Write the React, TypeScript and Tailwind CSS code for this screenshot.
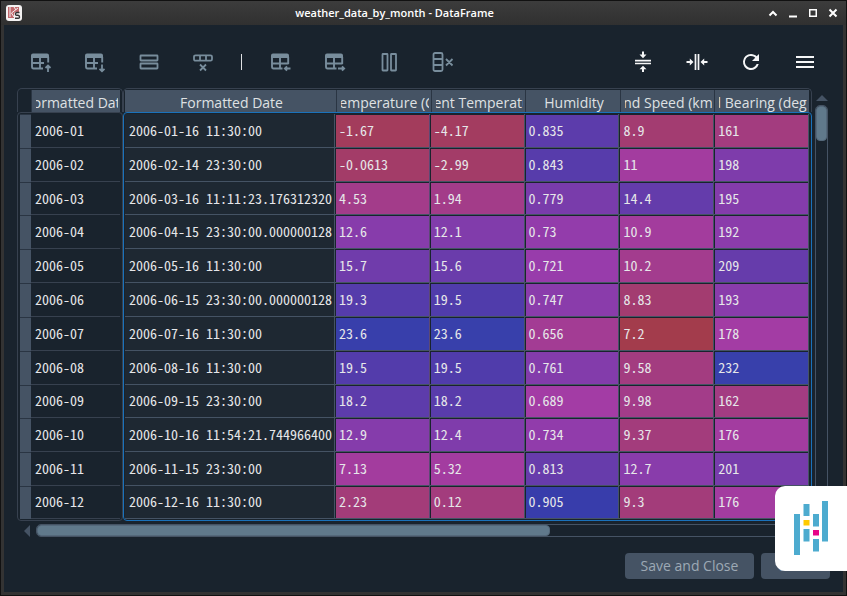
import type { ReactNode } from "react";

type Column = { title: string; min: number; max: number; values: string[] };

const months = Array.from({ length: 12 }, (_, i) => `2006-${String(i + 1).padStart(2, "0")}`);

const dates = [
  "2006-01-16 11:30:00",
  "2006-02-14 23:30:00",
  "2006-03-16 11:11:23.176312320",
  "2006-04-15 23:30:00.000000128",
  "2006-05-16 11:30:00",
  "2006-06-15 23:30:00.000000128",
  "2006-07-16 11:30:00",
  "2006-08-16 11:30:00",
  "2006-09-15 23:30:00",
  "2006-10-16 11:54:21.744966400",
  "2006-11-15 23:30:00",
  "2006-12-16 11:30:00",
];

const columns: Column[] = [
  {
    title: "Temperature (C)",
    min: -4.5,
    max: 23.7,
    values: ["-1.67", "-0.0613", "4.53", "12.6", "15.7", "19.3", "23.6", "19.5", "18.2", "12.9", "7.13", "2.23"],
  },
  {
    title: "Apparent Temperature (C)",
    min: -8,
    max: 23.7,
    values: ["-4.17", "-2.99", "1.94", "12.1", "15.6", "19.5", "23.6", "19.5", "18.2", "12.4", "5.32", "0.12"],
  },
  {
    title: "Humidity",
    min: 0.51,
    max: 0.91,
    values: ["0.835", "0.843", "0.779", "0.73", "0.721", "0.747", "0.656", "0.761", "0.689", "0.734", "0.813", "0.905"],
  },
  {
    title: "Wind Speed (km/h)",
    min: 6.96,
    max: 16.6,
    values: ["8.9", "11", "14.4", "10.9", "10.2", "8.83", "7.2", "9.58", "9.98", "9.37", "12.7", "9.3"],
  },
  {
    title: "Wind Bearing (degrees)",
    min: 135,
    max: 232,
    values: ["161", "198", "195", "192", "209", "193", "178", "232", "162", "176", "201", "176"],
  },
];

// Heat-map shade: high values are blue, low values run through magenta to red.
function shade(value: string, { min, max }: Column) {
  const t = (max - Number(value)) / (max - min);
  const hue = 360 * (0.66 + 0.33 * t);
  return `hsl(${hue} 100% 65% / 0.6)`;
}

function Svg({ children }: { children: ReactNode }) {
  return (
    <svg viewBox="0 0 24 24" className="size-6" fill="none" stroke="currentColor" strokeWidth="1.8" aria-hidden="true">
      {children}
    </svg>
  );
}

function TableGlyph({ side }: { side?: boolean }) {
  return (
    <g>
      <path d="M3 8V5.5A2 2 0 0 1 5 3.5H19A2 2 0 0 1 21 5.5V8Z" fill="currentColor" stroke="none" />
      <path d={side ? "M4 7V16.500Q4 18.500 5.500 18.500H14.500M20.200 7V14M4 13.500H20.500M12 7V18.500" : "M4 7V16.500Q4 18.500 5.500 18.500H15M20.200 7V12.500M4 13H16M12 7V18.500"} strokeWidth="1.9" />
    </g>
  );
}

const frameTools: { label: string; icon: ReactNode }[][] = [
  [
    {
      label: "Insert row above",
      icon: (
        <Svg>
          <TableGlyph />
          <path d="M20 22V16M17.500 18L20 15.500L22.500 18" />
        </Svg>
      ),
    },
    {
      label: "Insert row below",
      icon: (
        <Svg>
          <TableGlyph />
          <path d="M20 14.500V21M17.500 18.800L20 21.300L22.500 18.800" />
        </Svg>
      ),
    },
    {
      label: "Duplicate row",
      icon: (
        <Svg>
          <rect x="4.500" y="5.500" width="17" height="5" rx="0.500" />
          <rect x="4.500" y="13.500" width="17" height="5" rx="0.500" />
        </Svg>
      ),
    },
    {
      label: "Remove row",
      icon: (
        <Svg>
          <rect x="4" y="5.300" width="18" height="5.400" rx="1.500" />
          <path d="M10 5.300V10.700M16 5.300V10.700M10 14.500L16 20.500M16 14.500L10 20.500" />
        </Svg>
      ),
    },
  ],
  [
    {
      label: "Insert column before",
      icon: (
        <Svg>
          <TableGlyph side />
          <path d="M22.500 18.500H17M19 16.300L16.800 18.500L19 20.700" />
        </Svg>
      ),
    },
    {
      label: "Insert column after",
      icon: (
        <Svg>
          <TableGlyph side />
          <path d="M16 18.500H22M20 16.300L22.200 18.500L20 20.700" />
        </Svg>
      ),
    },
    {
      label: "Duplicate column",
      icon: (
        <Svg>
          <rect x="6.500" y="4" width="5" height="16.500" rx="0.500" />
          <rect x="15" y="4" width="5" height="16.500" rx="0.500" />
        </Svg>
      ),
    },
    {
      label: "Remove column",
      icon: (
        <Svg>
          <rect x="3.500" y="3" width="9" height="18" rx="1.500" />
          <path d="M3.500 9H12.500M3.500 15H12.500M16 9L22.500 15.500M22.500 9L16 15.500" />
        </Svg>
      ),
    },
  ],
];

const viewTools: { label: string; icon: ReactNode }[] = [
  {
    label: "Resize rows to contents",
    icon: (
      <Svg>
        <path d="M4 10.700H20M4 13.500H20" strokeWidth="1.700" />
        <path d="M12 1.500V5M12 22V18" strokeWidth="2" />
        <path d="M8.500 4.500H15.500L12 8.300ZM8.500 19.300H15.500L12 15.700Z" fill="currentColor" stroke="none" />
      </Svg>
    ),
  },
  {
    label: "Resize columns to contents",
    icon: (
      <Svg>
        <path d="M10.500 4V20M13.500 4V20" strokeWidth="1.700" />
        <path d="M1.500 12H5M22.500 12H19" strokeWidth="2" />
        <path d="M4.800 8.500V15.500L8.500 12ZM19.200 8.500V15.500L15.500 12Z" fill="currentColor" stroke="none" />
      </Svg>
    ),
  },
  {
    label: "Refresh",
    icon: (
      <Svg>
        <path
          d="M17.650 6.350C16.200 4.900 14.210 4 12 4A8 8 0 1 0 19.730 14H17.650C16.830 16.330 14.610 18 12 18A6 6 0 1 1 16.220 7.780L13 11H20V4Z"
          fill="currentColor"
          stroke="none"
        />
      </Svg>
    ),
  },
  {
    label: "Options",
    icon: (
      <Svg>
        <path d="M3 7H21M3 12H21M3 17H21" strokeWidth="2" />
      </Svg>
    ),
  },
];

function Tool({ label, icon }: { label: string; icon: ReactNode }) {
  return (
    <button type="button" aria-label={label} className="flex h-8 w-[54px] items-center justify-center">
      {icon}
    </button>
  );
}

function TitleBar() {
  return (
    <header className="flex h-6 items-center bg-linear-to-b from-[#3c3c3c] to-[#303030] pr-[7px] pl-[5px] text-white">
      <svg viewBox="0 0 16 16" className="size-4" aria-hidden="true">
        <rect width="16" height="16" rx="3" fill="#f4f2f2" />
        <path d="M2 2H13V7H9L8 9V13H2Z" fill="#c0686c" />
        <path d="M4 2V12M12 3L5.500 8L8 12M8 2L10 5" stroke="#f4f2f2" strokeWidth="1" fill="none" />
        <path d="M13.500 7.500H11Q9.500 7.500 9.500 9T11 10.300H12Q13.500 10.500 13.500 12T12 13.300H9" stroke="#333" strokeWidth="1.400" fill="none" />
      </svg>
      <h1 className="flex-1 text-center font-['Open_Sans','Noto_Sans',sans-serif] text-[11px] leading-4 font-semibold text-white">
        weather_data_by_month - DataFrame
      </h1>
      <div className="flex gap-2">
        <button type="button" aria-label="Shade">
          <svg viewBox="0 0 12 12" className="size-3" fill="none" stroke="currentColor" strokeWidth="2">
            <path d="M2.500 8.500L6 5L9.500 8.500" />
          </svg>
        </button>
        <button type="button" aria-label="Minimize">
          <svg viewBox="0 0 12 12" className="size-3" fill="none" stroke="currentColor" strokeWidth="2">
            <path d="M2 9.500H10" />
          </svg>
        </button>
        <button type="button" aria-label="Maximize">
          <svg viewBox="0 0 12 12" className="size-3" fill="none" stroke="currentColor" strokeWidth="1.500">
            <rect x="2.750" y="2.750" width="6.500" height="6.500" />
          </svg>
        </button>
        <button type="button" aria-label="Close window">
          <svg viewBox="0 0 12 12" className="size-3" fill="none" stroke="currentColor" strokeWidth="2">
            <path d="M2.500 2.500L9.500 9.500M9.500 2.500L2.500 9.500" />
          </svg>
        </button>
      </div>
    </header>
  );
}

function HeadCell({ title }: { title: string }) {
  return (
    <th scope="col" className="min-w-0 border-l border-[#2a3543] bg-[#455364] pt-1 pr-0.5 pl-1 font-normal first:border-l-0">
      <div className="flex justify-center overflow-hidden whitespace-nowrap">
        <span>{title}</span>
      </div>
    </th>
  );
}

const headClass =
  "block h-6 rounded-t-[5px] border border-b-0 border-[#37414f] pt-px text-[14px] leading-[18px] text-[#dfe1e3]";
const bodyClass =
  "grid h-[409px] grid-rows-[repeat(11,minmax(0,1fr))_33px] rounded-[4px] border py-px font-['Noto_Sans_Mono_CJK_SC','DejaVu_Sans_Mono',monospace] text-[14px] leading-5 text-[#e6e7e9]";

function IndexTable() {
  return (
    <table className="block w-[106px] shrink-0">
      <thead className={`${headClass} px-0.5`}>
        <tr className="grid h-full grid-cols-[11px_minmax(0,1fr)]">
          <td />
          <HeadCell title="Formatted Date" />
        </tr>
      </thead>
      <tbody className={`${bodyClass} border-[#37414f] px-0.5`}>
        {months.map((month) => (
          <tr key={month} className="grid grid-cols-[11px_minmax(0,1fr)]">
            <td className="border-t border-[#2a3543] bg-[#455364]" />
            <th scope="row" className="flex items-center border-b border-[#37414f] pb-px pl-1 text-left font-normal">
              {month}
            </th>
          </tr>
        ))}
      </tbody>
    </table>
  );
}

function DataTable() {
  return (
    <table className="block min-w-0 flex-1">
      <thead className={`${headClass} pr-0.5 pl-px`}>
        <tr className="grid h-full grid-cols-[211px_repeat(5,minmax(0,1fr))]">
          <HeadCell title="Formatted Date" />
          {columns.map((column) => (
            <HeadCell key={column.title} title={column.title} />
          ))}
        </tr>
      </thead>
      <tbody className={`${bodyClass} border-[#1a72bb] pr-0.5 pl-px`}>
        {dates.map((date, row) => (
          <tr key={date} className="grid grid-cols-[210px_repeat(5,minmax(0,1fr))]">
            <td className="flex items-center border-r border-b border-[#455364] bg-[#1e2832] pb-px pl-1 whitespace-nowrap">
              {date}
            </td>
            {columns.map((column, i) => (
              <td
                key={column.title}
                className={`flex border-r border-b border-b-[#455364] pt-px pl-px ${i === 0 ? "border-r-[#5c4a74]" : "border-r-[#455364]"}`}
              >
                <div
                  className="flex flex-1 items-center pb-0.5 pl-[3px]"
                  style={{ backgroundColor: shade(column.values[row], column) }}
                >
                  {column.values[row]}
                </div>
              </td>
            ))}
          </tr>
        ))}
      </tbody>
    </table>
  );
}

function PandasLogo() {
  return (
    <svg viewBox="0 0 34 54" className="h-[54px] w-[34px]" role="img" aria-label="pandas">
      <g fill="#4dabcf">
        <rect x="0" y="13" width="6" height="41" />
        <rect x="9.500" y="3" width="6" height="12" />
        <rect x="9.500" y="28" width="6" height="12.500" />
        <rect x="19" y="13" width="6" height="12.500" />
        <rect x="19" y="38" width="6" height="12.500" />
        <rect x="28" y="0" width="6" height="40.500" />
      </g>
      <rect x="9.500" y="19" width="6" height="5.500" fill="#ffca00" />
      <rect x="19" y="29" width="6" height="5.500" fill="#e70488" />
    </svg>
  );
}

export default function App() {
  return (
    <div className="relative flex min-h-screen flex-col border border-[#111111] bg-[#333333] font-['Open_Sans','Noto_Sans',sans-serif]">
      <TitleBar />
      <main className="mx-[3px] mb-[3px] flex flex-1 flex-col bg-[#19232d]">
        <div className="flex h-[63px] items-end pr-[11px] pb-2.5 pl-[9px] text-[#788d9c]">
          {frameTools.map((group, i) => (
            <div key={i} className="flex items-center">
              {i > 0 && (
                <span className="flex w-6 justify-center">
                  <span className="h-4 w-px bg-[#dfe1e3]" />
                </span>
              )}
              {group.map((tool) => (
                <Tool key={tool.label} {...tool} />
              ))}
            </div>
          ))}
          <div className="ml-auto flex text-[#f5f6f7]">
            {viewTools.map((tool) => (
              <Tool key={tool.label} {...tool} />
            ))}
          </div>
        </div>

        <section className="flex pr-[15px] pl-[13px]">
          <div className="min-w-0 flex-1">
            <div className="flex">
              <IndexTable />
              <DataTable />
            </div>
            <div className="mt-[3px] flex h-[13px] items-center" aria-hidden="true">
              <span className="flex w-[19px] justify-center">
                <span className="border-y-[6px] border-r-[6px] border-y-transparent border-r-[#455364]" />
              </span>
              <div className="h-full flex-1 rounded-[5px] border border-[#455364]">
                <div className="h-full w-[68%] rounded-[4px] border border-[#54687a] bg-[#60798b]" />
              </div>
              <span className="flex w-[19px] justify-center">
                <span className="border-y-[6px] border-l-[6px] border-y-transparent border-l-[#455364]" />
              </span>
            </div>
          </div>
          <div className="ml-[3px] flex w-[13px] flex-col items-center pt-[7px] pb-4" aria-hidden="true">
            <span className="border-x-[6px] border-b-[6px] border-x-transparent border-b-[#455364]" />
            <div className="mt-1 w-full flex-1 rounded-[5px] border border-[#455364]">
              <div className="h-[35px] rounded-[4px] border border-[#54687a] bg-[#60798b]" />
            </div>
          </div>
        </section>

        <footer className="mt-4 flex justify-end gap-[7px] pr-[13px] pb-[13px] text-[14px] leading-[26px] text-[#9da9b5]">
          <button type="button" className="w-[129px] rounded bg-[#455364]">
            Save and Close
          </button>
          <button type="button" className="w-[69px] rounded bg-[#455364]">
            Close
          </button>
        </footer>
      </main>
      <div className="absolute -right-px bottom-6 flex h-[85px] w-[72px] items-center justify-center rounded-l-[10px] bg-white pb-px">
        <PandasLogo />
      </div>
    </div>
  );
}
